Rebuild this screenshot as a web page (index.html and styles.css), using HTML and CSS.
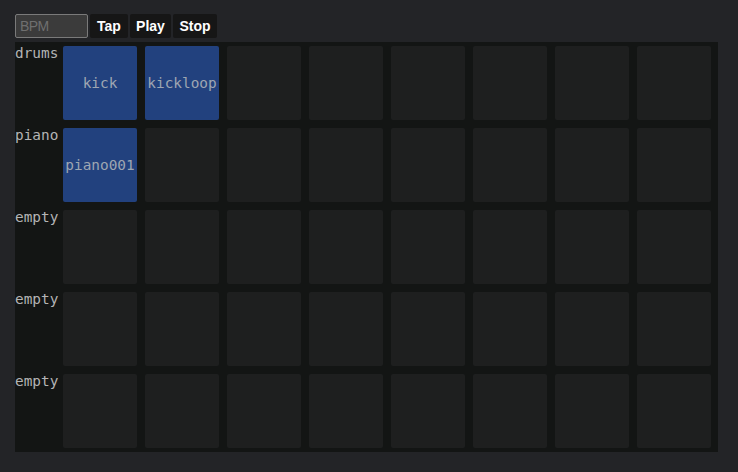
FILE: index.html
```html
<!DOCTYPE html>
<html>
<head>
<meta charset="utf-8">
<link rel="stylesheet" href="styles.css">
</head>
<body>
<div class="controls">
  <input class="bpm" type="text" placeholder="BPM">
  <button class="btn btn-tap">Tap</button>
  <button class="btn btn-play">Play</button>
  <button class="btn btn-stop">Stop</button>
</div>
<div class="grid">
  <div class="row">
    <div class="label">drums</div>
    <div class="cell filled">kick</div>
    <div class="cell filled">kickloop</div>
    <div class="cell"></div><div class="cell"></div><div class="cell"></div><div class="cell"></div><div class="cell"></div><div class="cell"></div>
  </div>
  <div class="row">
    <div class="label">piano</div>
    <div class="cell filled">piano001</div>
    <div class="cell"></div><div class="cell"></div><div class="cell"></div><div class="cell"></div><div class="cell"></div><div class="cell"></div><div class="cell"></div>
  </div>
  <div class="row">
    <div class="label">empty</div>
    <div class="cell"></div><div class="cell"></div><div class="cell"></div><div class="cell"></div><div class="cell"></div><div class="cell"></div><div class="cell"></div><div class="cell"></div>
  </div>
  <div class="row">
    <div class="label">empty</div>
    <div class="cell"></div><div class="cell"></div><div class="cell"></div><div class="cell"></div><div class="cell"></div><div class="cell"></div><div class="cell"></div><div class="cell"></div>
  </div>
  <div class="row">
    <div class="label">empty</div>
    <div class="cell"></div><div class="cell"></div><div class="cell"></div><div class="cell"></div><div class="cell"></div><div class="cell"></div><div class="cell"></div><div class="cell"></div>
  </div>
</div>
</body>
</html>
```
FILE: styles.css
```css
html, body {
  margin: 0;
  background: #232427;
}
body {
  padding: 14px 0 0 15px;
}
.controls {
  display: flex;
  gap: 2px;
  height: 24px;
  margin-bottom: 4px;
}
.bpm {
  box-sizing: border-box;
  width: 73px;
  height: 24px;
  margin: 0;
  padding: 0 4px;
  background: #3b3b3b;
  border: 1px solid #7a7a7a;
  border-radius: 2px;
  color: #ddd;
  font-family: "Liberation Sans", Arial, sans-serif;
  font-size: 14px;
  letter-spacing: -0.6px;
  outline: none;
}
.bpm::placeholder {
  color: #6f6f6f;
}
.btn {
  box-sizing: border-box;
  height: 24px;
  margin: 0;
  padding: 0;
  background: #161616;
  border: none;
  border-radius: 2px;
  color: #ffffff;
  font-family: "Liberation Sans", Arial, sans-serif;
  font-weight: bold;
  font-size: 14px;
  text-align: center;
}
.btn-tap { width: 38px; }
.btn-play { width: 41px; }
.btn-stop { width: 44px; }
.grid {
  display: flex;
  flex-direction: column;
  width: 703px;
  background: #131514;
  font-family: "DejaVu Sans Mono", monospace;
  font-size: 14.4px;
}
.row {
  display: flex;
  height: 82px;
}
.label {
  width: 44px;
  color: #b4b4b4;
  line-height: 18px;
  padding-top: 2px;
}
.cell {
  width: 74px;
  height: 74px;
  margin: 4px;
  border-radius: 2px;
  background: #1e1f1f;
  display: flex;
  align-items: center;
  justify-content: center;
  color: #9ea6b2;
}
.cell.filled {
  background: #22417e;
}
```
